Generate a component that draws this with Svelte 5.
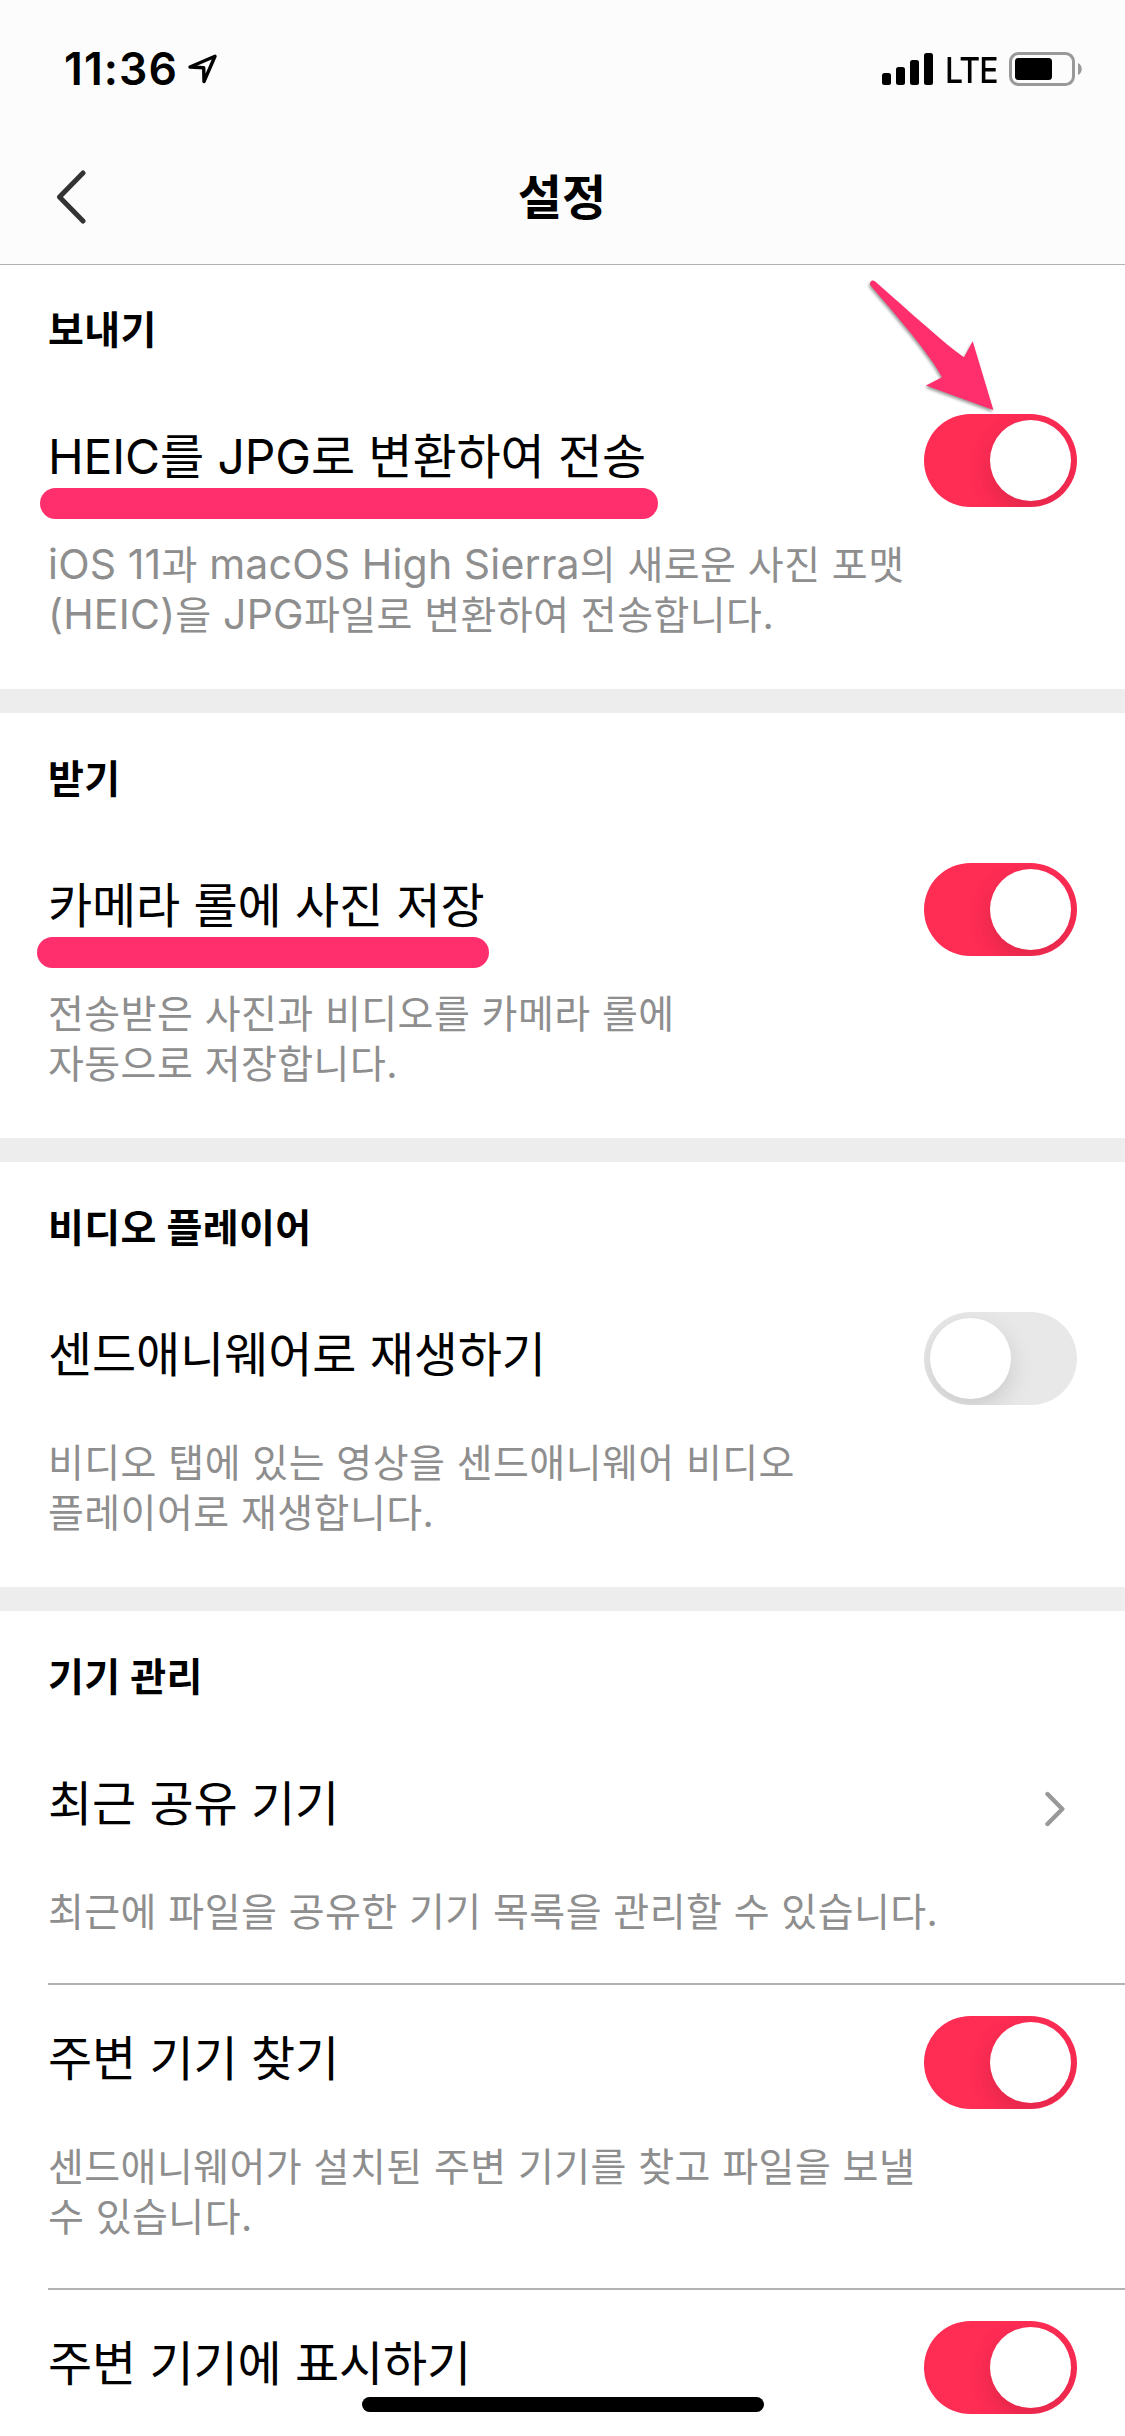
<script>
    const sections = [
        {
            title: '보내기',
            rows: [
                {
                    label: 'HEIC를 JPG로 변환하여 전송',
                    lines: ['iOS 11과 macOS High Sierra의 새로운 사진 포맷', '(HEIC)을 JPG파일로 변환하여 전송합니다.'],
                    on: true,
                    marker: { left: 40, width: 618 },
                    arrow: true
                }
            ]
        },
        {
            title: '받기',
            rows: [
                {
                    label: '카메라 롤에 사진 저장',
                    lines: ['전송받은 사진과 비디오를 카메라 롤에', '자동으로 저장합니다.'],
                    on: true,
                    marker: { left: 37, width: 452 }
                }
            ]
        },
        {
            title: '비디오 플레이어',
            rows: [
                {
                    label: '센드애니웨어로 재생하기',
                    lines: ['비디오 탭에 있는 영상을 센드애니웨어 비디오', '플레이어로 재생합니다.'],
                    on: false
                }
            ]
        },
        {
            title: '기기 관리',
            rows: [
                {
                    label: '최근 공유 기기',
                    lines: ['최근에 파일을 공유한 기기 목록을 관리할 수 있습니다.'],
                    link: true
                },
                {
                    label: '주변 기기 찾기',
                    lines: ['센드애니웨어가 설치된 주변 기기를 찾고 파일을 보낼', '수 있습니다.'],
                    on: true
                },
                {
                    label: '주변 기기에 표시하기',
                    lines: [],
                    on: true
                }
            ]
        }
    ];

    // Latin runs are set slightly larger than the Hangul around them
    const runs = (line) => line.split(/([A-Za-z0-9()]+)/).filter(Boolean);
    const isLatin = (run) => /^[A-Za-z0-9()]/.test(run);
</script>

<div class="screen">
    <header>
        <div class="status">
            <span class="time">11:36</span>
            <svg class="location" width="30" height="30" viewBox="0 0 30 30">
                <path d="M2 13 27 2.3 16 27.5 15.7 13.8Z" />
            </svg>
            <svg class="signal" width="51" height="32" viewBox="0 0 51 32">
                <rect x="0" y="20" width="9" height="12" rx="2.5" />
                <rect x="14" y="14" width="9" height="18" rx="2.5" />
                <rect x="28" y="7" width="9" height="25" rx="2.5" />
                <rect x="42" y="0" width="9" height="32" rx="2.5" />
            </svg>
            <span class="network">LTE</span>
            <svg class="battery" width="73" height="34" viewBox="0 0 73 34">
                <rect x="1.5" y="1.5" width="63" height="31" rx="8" fill="none" stroke="#999" stroke-width="3" />
                <rect x="6" y="6" width="37" height="22" rx="3.5" />
                <path d="M69 11C74 13 74 21 69 23Z" fill="#999" />
            </svg>
        </div>
        <nav>
            <svg class="back" width="30" height="56" viewBox="0 0 30 56">
                <path d="M27 4 3.5 28 27 52" />
            </svg>
            <h1>설정</h1>
        </nav>
    </header>

    <main>
        {#each sections as section}
            <section>
                <h2>{section.title}</h2>
                {#each section.rows as row}
                    <div class="row">
                        <div class="head">
                            <span class="label">{row.label}</span>
                            {#if row.link}
                                <svg class="chevron" width="20" height="36" viewBox="0 0 20 36">
                                    <path d="M2.5 3 17.3 18 2.5 33" />
                                </svg>
                            {:else}
                                <span class="toggle" class:on={row.on}></span>
                            {/if}
                        </div>
                        <p>
                            {#each row.lines as line}
                                <span class="line">{#each runs(line) as run}<span class:latin={isLatin(run)}>{run}</span>{/each}</span>
                            {/each}
                        </p>
                        {#if row.marker}
                            <i class="marker" style="left: {row.marker.left - 48}px; width: {row.marker.width}px"></i>
                        {/if}
                        {#if row.arrow}
                            <svg class="arrow" width="136" height="146" viewBox="0 0 136 146">
                                <path d="M15.2 11.5C50 42 85 74 104 87.3L112.7 71.3 133.4 140 66 115.5 82 107.3C70 84 35 44 10.6 15.5C8.6 12.5 12 8.5 15.2 11.5Z" />
                            </svg>
                        {/if}
                    </div>
                {/each}
            </section>
        {/each}
    </main>

    <div class="home"></div>
</div>

<style>
    :global(body) {
        background: #fff;
    }

    .screen {
        position: relative;
        width: 1125px;
        height: 2436px;
        overflow: hidden;
        background: #fff;
        color: #000;
        font-family: Inter, 'Noto Sans CJK KR', sans-serif;
    }

    header {
        height: 264px;
        background: #fcfcfc;
        box-shadow: 0 1px #b2b2b2;
    }

    .status {
        display: flex;
        align-items: center;
        height: 138px;
        padding: 0 43px 0 64px;
    }

    .time {
        width: 124px;
        font-size: 44.5px;
        font-weight: 600;
        letter-spacing: 1.1px;
        white-space: nowrap;
    }

    .location {
        fill: none;
        stroke: #000;
        stroke-width: 3.4;
        stroke-linejoin: round;
    }

    .signal {
        margin-left: auto;
    }

    .network {
        width: 64px;
        margin: 2px 0 0 12px;
        font-size: 36px;
        font-weight: 500;
        line-height: 34px;
        letter-spacing: -1px;
        transform: scaleX(0.89);
        transform-origin: left;
    }

    nav {
        display: grid;
        grid-template-columns: 1fr auto 1fr;
        align-items: center;
        height: 118px;
        padding: 0 57px 0 56px;
    }

    .back {
        fill: none;
        stroke: #333;
        stroke-width: 5;
        stroke-linecap: round;
        stroke-linejoin: round;
    }

    h1 {
        margin: 2px 0 0;
        font-size: 48px;
        font-weight: 600;
        line-height: 60px;
    }

    section {
        height: 425px;
        border-bottom: 24px solid #ededed;
    }

    section:last-child {
        height: auto;
        border: 0;
    }

    h2 {
        margin: 0;
        padding: 41px 48px 28px;
        font-size: 39px;
        font-weight: 700;
        line-height: 50px;
        letter-spacing: 0.4px;
    }

    .row {
        position: relative;
        margin-left: 48px;
        padding: 31px 48px 46px 0;
    }

    .row + .row {
        border-top: 2px solid #b2b2b2;
    }

    .head {
        display: flex;
        align-items: center;
        justify-content: space-between;
        height: 93px;
    }

    .label {
        padding-bottom: 7px;
        font-size: 48px;
        line-height: 60px;
        letter-spacing: -0.12px;
        white-space: nowrap;
    }

    .toggle {
        box-sizing: border-box;
        width: 153px;
        height: 93px;
        padding: 6px;
        overflow: hidden;
        border-radius: 47px;
        background: #e8e8e8;
    }

    .toggle::before {
        content: '';
        display: block;
        width: 81px;
        height: 81px;
        border-radius: 50%;
        background: #fff;
        box-shadow: 0 9px 24px rgba(0, 0, 0, 0.13);
    }

    .toggle.on {
        background: #ff2c54;
    }

    .toggle.on::before {
        margin-left: auto;
    }

    .chevron {
        margin: 3px 12px 0 0;
        fill: none;
        stroke: #999;
        stroke-width: 4.4;
        stroke-linecap: round;
        stroke-linejoin: round;
    }

    p {
        margin: 33px 0 0;
        color: #8e8e8e;
        font-size: 39px;
        line-height: 50px;
        letter-spacing: 0.43px;
    }

    .line {
        display: block;
        height: 50px;
        white-space: nowrap;
    }

    .latin {
        font-size: 41px;
        line-height: 1;
        letter-spacing: 0.22px;
    }

    /* Hand-drawn highlights sit over the row */
    .marker {
        position: absolute;
        top: 105px;
        height: 31px;
        border-radius: 16px;
        background: #ff2e6c;
    }

    .arrow {
        position: absolute;
        top: -113px;
        right: 129px;
        fill: #ff2e6c;
        filter: drop-shadow(-1px 2px 1.5px rgba(0, 0, 0, 0.4));
    }

    .home {
        position: absolute;
        left: 362px;
        bottom: 24px;
        width: 402px;
        height: 15px;
        border-radius: 8px;
        background: #000;
    }
</style>
